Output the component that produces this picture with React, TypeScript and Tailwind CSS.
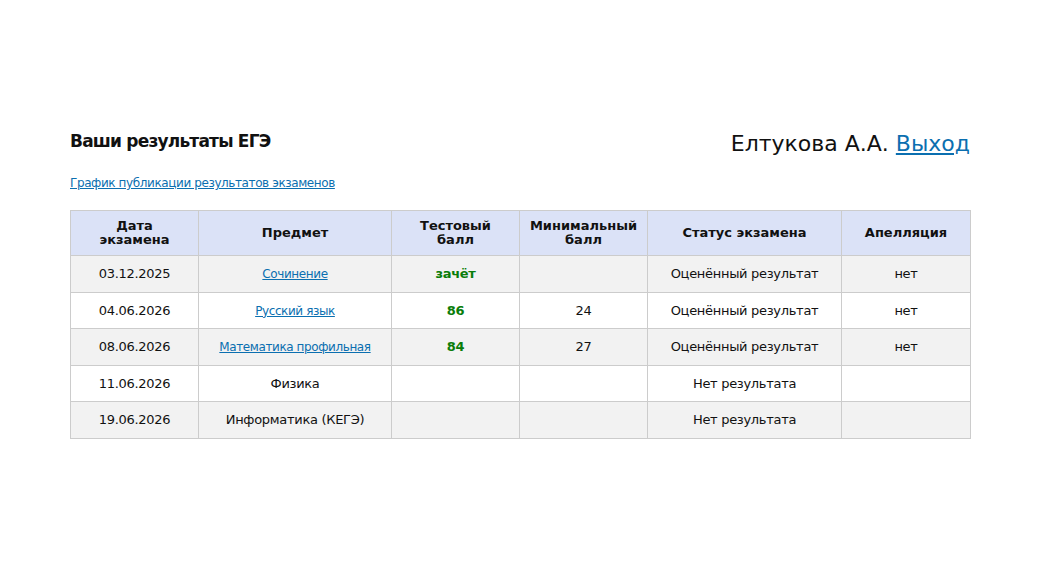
import React from "react"

type Row = {
  date: string
  subject: string
  link: boolean
  score: string
  min: string
  status: string
  appeal: string
}

const rows: Array<Row> = [
  { date: "03.12.2025", subject: "Сочинение", link: true, score: "зачёт", min: "", status: "Оценённый результат", appeal: "нет" },
  { date: "04.06.2026", subject: "Русский язык", link: true, score: "86", min: "24", status: "Оценённый результат", appeal: "нет" },
  { date: "08.06.2026", subject: "Математика профильная", link: true, score: "84", min: "27", status: "Оценённый результат", appeal: "нет" },
  { date: "11.06.2026", subject: "Физика", link: false, score: "", min: "", status: "Нет результата", appeal: "" },
  { date: "19.06.2026", subject: "Информатика (КЕГЭ)", link: false, score: "", min: "", status: "Нет результата", appeal: "" },
]

const th = "border border-[#cccccc] font-bold text-[13px] leading-[14px] text-center align-middle px-2"
const td = "border border-[#cccccc] text-[13px] tracking-[-0.3px] text-center align-middle px-2"

export default function App() {
  return (
    <div className="w-full min-h-screen bg-white text-[#111] font-['DejaVu_Sans','Noto_Sans',sans-serif]">
      <div className="w-[900px] mx-auto pt-[128px]">
        <div className="flex justify-between items-center h-[28px]">
          <h1 className="text-[17px] font-bold tracking-[-0.8px]">Ваши результаты ЕГЭ</h1>
          <div className="text-[22px] mt-[2px]">
            Елтукова А.А. <a href="#" className="text-[#0b6fb0] underline">Выход</a>
          </div>
        </div>
        <a href="#" className="block mt-[18px] text-[12px] tracking-[-0.4px] text-[#0b6fb0] underline w-fit">График публикации результатов экзаменов</a>
        <table className="mt-[18px] w-full border-collapse table-fixed">
          <colgroup>
            <col className="w-[128px]" />
            <col className="w-[193px]" />
            <col className="w-[128px]" />
            <col className="w-[128px]" />
            <col className="w-[194px]" />
            <col className="w-[129px]" />
          </colgroup>
          <thead>
            <tr className="h-[45px] bg-[#dbe2f7]">
              <th className={th}>Дата<br />экзамена</th>
              <th className={th}>Предмет</th>
              <th className={th}>Тестовый<br />балл</th>
              <th className={th}>Минимальный<br />балл</th>
              <th className={th}>Статус экзамена</th>
              <th className={th}>Апелляция</th>
            </tr>
          </thead>
          <tbody>
            {rows.map((r, i) => (
              <tr key={i} className={i % 2 == 0 ? "h-[36.5px] bg-[#f2f2f2]" : "h-[36.5px] bg-white"}>
                <td className={td}>{r.date}</td>
                <td className={td}>
                  {r.link ? (
                    <a href="#" className="text-[#0b6fb0] underline text-[12px] tracking-[-0.4px]">{r.subject}</a>
                  ) : (
                    r.subject
                  )}
                </td>
                <td className={td + " font-bold text-[#0a7d0a]"}>{r.score}</td>
                <td className={td}>{r.min}</td>
                <td className={td}>{r.status}</td>
                <td className={td}>{r.appeal}</td>
              </tr>
            ))}
          </tbody>
        </table>
      </div>
    </div>
  )
}
